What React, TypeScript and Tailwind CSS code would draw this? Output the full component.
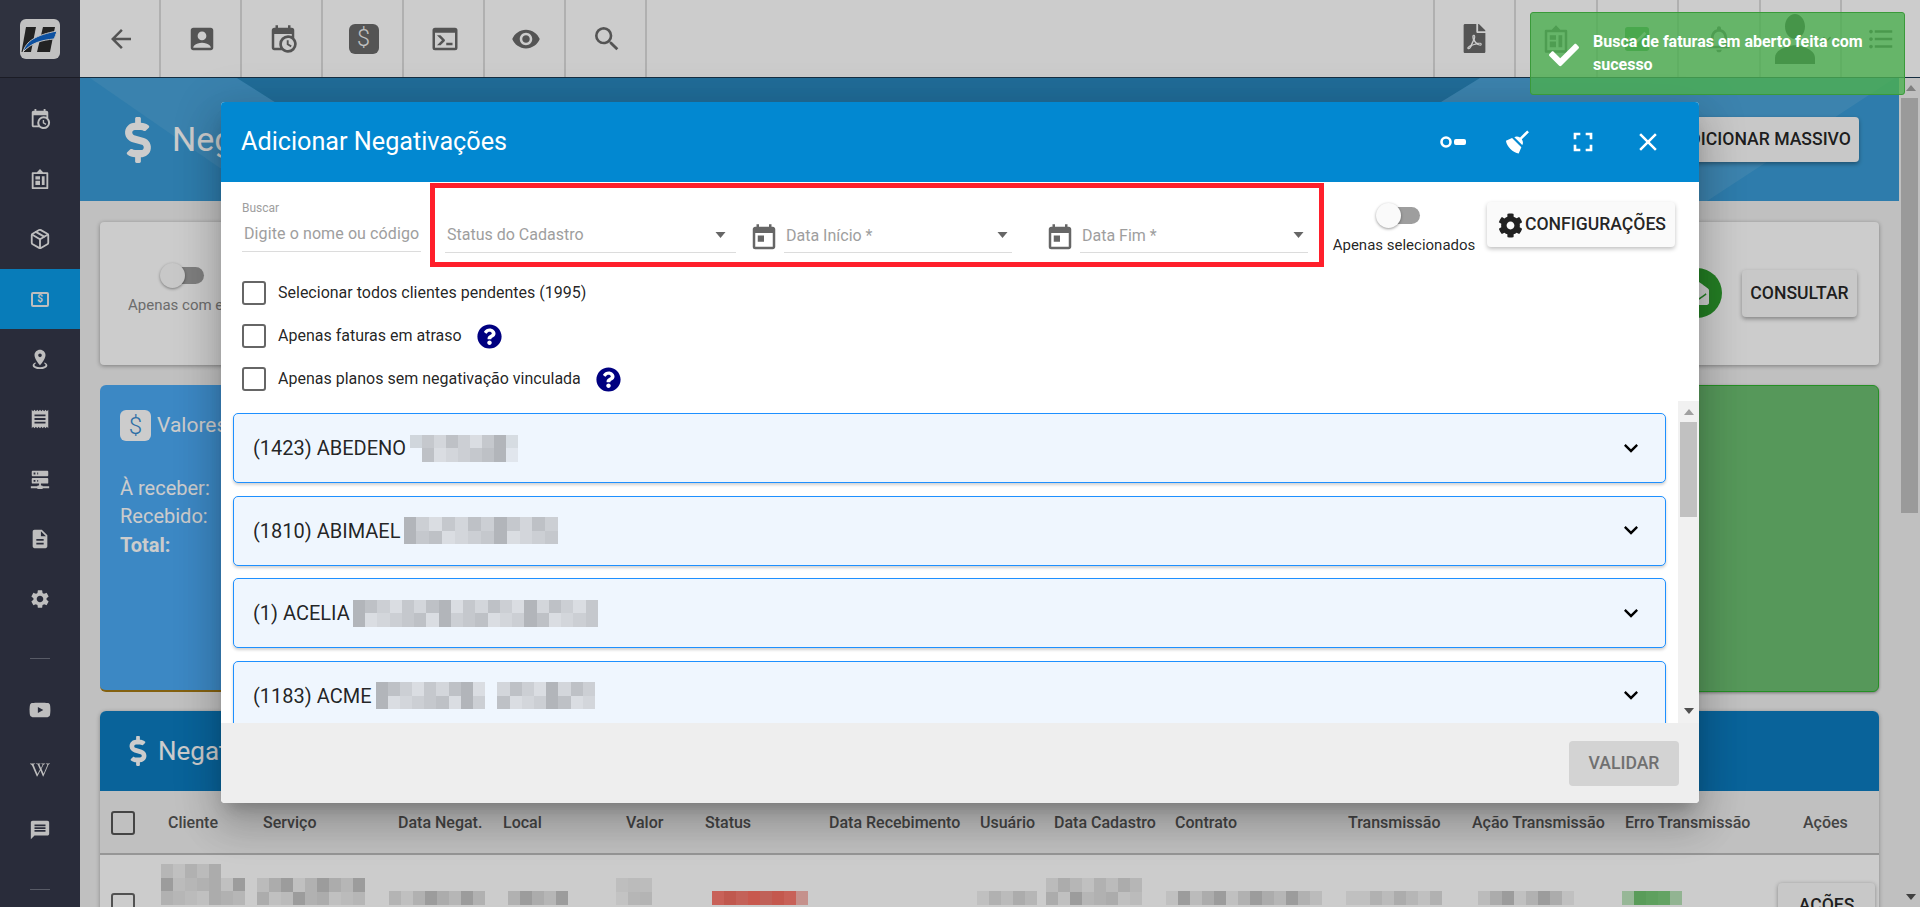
import React from 'react';
import {
  MdAccountBox,
  MdArrowBack,
  MdCheckBox,
  MdClose,
  MdDescription,
  MdExpandMore,
  MdFormatListBulleted,
  MdFullscreen,
  MdMessage,
  MdNotificationsNone,
  MdPerson,
  MdReceipt,
  MdRemoveRedEye,
  MdSearch,
  MdSettings,
  MdToday,
} from 'react-icons/md';
import {
  FaCheck,
  FaCog,
  FaDollarSign,
  FaEnvelopeOpen,
  FaFilePdf,
  FaQuestionCircle,
  FaWikipediaW,
  FaYoutube,
} from 'react-icons/fa';
import { LuPackage } from 'react-icons/lu';

type IconProps = { size?: number; className?: string };

const Mdi: React.FC<IconProps & { d: string }> = ({ d, size = 24, className }) => (
  <svg width={size} height={size} viewBox="0 0 24 24" fill="currentColor" className={className}>
    <path d={d} />
  </svg>
);

const CalendarClock: React.FC<IconProps> = props => (
  <Mdi
    {...props}
    d="M15,13H16.5V15.82L18.94,17.23L18.19,18.53L15,16.69V13M19,8H5V19H9.67C9.24,18.09 9,17.07 9,16A7,7 0 0,1 16,9C17.07,9 18.09,9.24 19,9.67V8M5,21C3.89,21 3,20.1 3,19V5C3,3.89 3.89,3 5,3H6V1H8V3H16V1H18V3H19A2,2 0 0,1 21,5V11.1C22.24,12.36 23,14.09 23,16A7,7 0 0,1 16,23C14.09,23 12.36,22.24 11.1,21H5M16,11.15A4.85,4.85 0 0,0 11.15,16C11.15,18.68 13.32,20.85 16,20.85A4.85,4.85 0 0,0 20.85,16C20.85,13.32 18.68,11.15 16,11.15Z"
  />
);

const Console: React.FC<IconProps> = props => (
  <Mdi
    {...props}
    d="M20,19V7H4V19H20M20,3A2,2 0 0,1 22,5V19A2,2 0 0,1 20,21H4A2,2 0 0,1 2,19V5A2,2 0 0,1 4,3H20M13,17V15H18V17H13M9.58,13L5.57,9H8.4L11.7,12.3C12.09,12.69 12.09,13.33 11.7,13.72L8.42,17H5.59L9.58,13Z"
  />
);

const MapMarkerRadius: React.FC<IconProps> = props => (
  <Mdi
    {...props}
    d="M12,2C15.31,2 18,4.66 18,7.95C18,12.41 12,19 12,19C12,19 6,12.41 6,7.95C6,4.66 8.69,2 12,2M12,6A2,2 0 0,0 10,8A2,2 0 0,0 12,10A2,2 0 0,0 14,8A2,2 0 0,0 12,6M20,19C20,21.21 16.42,23 12,23C7.58,23 4,21.21 4,19C4,17.71 5.22,16.56 7.11,15.83L7.75,16.74C6.67,17.19 6,17.81 6,18.5C6,19.88 8.69,21 12,21C15.31,21 18,19.88 18,18.5C18,17.81 17.33,17.19 16.25,16.74L16.89,15.83C18.78,16.56 20,17.71 20,19Z"
  />
);

const ServerNetwork: React.FC<IconProps> = props => (
  <Mdi
    {...props}
    d="M13,19H14A1,1 0 0,1 15,20H22V22H15A1,1 0 0,1 14,23H10A1,1 0 0,1 9,22H2V20H9A1,1 0 0,1 10,19H11V17H4A1,1 0 0,1 3,16V12A1,1 0 0,1 4,11H20A1,1 0 0,1 21,12V16A1,1 0 0,1 20,17H13V19M4,3H20A1,1 0 0,1 21,4V8A1,1 0 0,1 20,9H4A1,1 0 0,1 3,8V4A1,1 0 0,1 4,3M9,7H10V5H9V7M9,15H10V13H9V15M5,5V7H7V5H5M5,13V15H7V13H5Z"
  />
);

const Broom: React.FC<IconProps> = props => (
  <Mdi
    {...props}
    d="M19.36,2.72L20.78,4.14L15.06,9.85C16.13,11.39 16.28,13.24 15.38,14.44L9.06,8.12C10.26,7.22 12.11,7.37 13.65,8.44L19.36,2.72M5.93,17.57C3.92,15.56 2.69,13.16 2.35,10.92L7.23,8.83L14.67,16.27L12.58,21.15C10.34,20.81 7.94,19.58 5.93,17.57Z"
  />
);

// prancheta com telhadinho em cima e paineis dentro
const BoardIcon: React.FC<IconProps> = ({ size = 24, className }) => (
  <svg width={size} height={size} viewBox="0 0 24 24" fill="currentColor" className={className}>
    <path d="M12 1l3.4 3.5H20a1 1 0 0 1 1 1V22a1 1 0 0 1-1 1H4a1 1 0 0 1-1-1V5.5a1 1 0 0 1 1-1h4.6L12 1zM5 6.5V21h14V6.5H5zM7 9h5v3.5H7V9zm0 5h5v4.5H7V14zm7-5h3v9.5h-3V9z" />
  </svg>
);

const DollarBox: React.FC<IconProps & { box?: string; ink?: string }> = ({
  size = 30,
  box = 'bg-[#6a6a6a]',
  ink = 'text-[#f2f2f2]',
}) => (
  <div
    className={`flex items-center justify-center rounded-[6px] font-light ${box} ${ink}`}
    style={{ width: size, height: size, fontSize: size * 0.78 }}
  >
    $
  </div>
);

const KeyIcon: React.FC = () => (
  <svg width="26" height="14" viewBox="0 0 26 14" fill="none">
    <circle cx="6" cy="7" r="4.5" stroke="white" strokeWidth="2.6" />
    <rect x="14" y="4" width="12" height="6" rx="2" fill="white" />
  </svg>
);

const Logo: React.FC = () => (
  <svg width="40" height="40" viewBox="0 0 40 40">
    <rect width="40" height="40" rx="6" fill="#f2f2f2" />
    <path d="M6 8h10l-5 25H1.5z" fill="#2b2b2b" />
    <path d="M23 8h12l-5 25H17z" fill="#2b2b2b" />
    <path d="M3 33C6 22 16 16 37 12c-1 3-2 6-3 8-12 1-23 4-31 13z" fill="#0f64c8" stroke="#f2f2f2" strokeWidth="1" />
  </svg>
);

// bloco pixelado que esconde dado de cliente; '.' deixa a celula vazia, 'l' deixa ela mais clara
const TONES: Record<string, (n: number) => string> = {
  list: n => {
    const v = n % 7 === 0 ? 178 : 190 + (n % 5) * 7;
    return `rgb(${v},${v + 3},${v + 8})`;
  },
  gray: n => {
    const v = n % 6 === 0 ? 196 : 216 + (n % 5) * 6;
    return `rgb(${v},${v},${v})`;
  },
  red: n => `rgb(${240 + (n % 3) * 5},${104 + (n % 4) * 6},${92 + (n % 4) * 6})`,
  green: n => `rgb(${112 + (n % 3) * 6},${196 + (n % 3) * 4},${112 + (n % 3) * 6})`,
};

const Pix: React.FC<{ rows: string[]; w?: number; h?: number; tone?: string; seed?: number; className?: string }> = ({
  rows,
  w = 12,
  h = 13.5,
  tone = 'gray',
  seed = 3,
  className = '',
}) => (
  <div className={`flex flex-col shrink-0 ${className}`}>
    {rows.map((row, r) => (
      <div key={r} className="flex">
        {row.split('').map((c, i) => (
          <div
            key={i}
            style={{
              width: w,
              height: h,
              opacity: c === 'l' ? 0.5 : 1,
              backgroundColor: c === '.' ? 'transparent' : TONES[tone]((seed + i * 3 + r * 11 + i * r) * 7 + i),
            }}
          />
        ))}
      </div>
    ))}
  </div>
);

const Arrow: React.FC<{ up?: boolean; className?: string }> = ({ up, className }) => (
  <svg width="10" height="6" viewBox="0 0 10 6" fill="currentColor" className={className}>
    <path d={up ? 'M5 0l5 6H0z' : 'M0 0h10L5 6z'} />
  </svg>
);

const Toggle: React.FC = () => (
  <div className="relative w-[44px] h-[26px]">
    <div className="absolute left-[9px] right-0 top-[4px] h-[17px] rounded-full bg-[#9e9e9e]" />
    <div className="absolute left-0 top-0 w-[25px] h-[25px] rounded-full bg-[#fafafa] shadow-[0_1px_3px_rgba(0,0,0,0.4)]" />
  </div>
);

const Checkbox: React.FC = () => (
  <div className="w-6 h-6 shrink-0 rounded-[3px] border-2 border-[#666666] bg-white" />
);

const SelectField: React.FC<{ label: string; width: string; tight?: boolean }> = ({ label, width, tight }) => (
  <div
    className={`flex items-center justify-between h-[34px] pb-[2px] border-b border-[#dcdcdc] text-[16px] text-[#9e9e9e] pl-[2px] ${width} ${tight ? 'pr-[4px]' : 'pr-[10px]'}`}
  >
    <span className={tight ? 'pt-[2px]' : ''}>{label}</span>
    <Arrow className="w-[11px] text-[#666666]" />
  </div>
);

const topLeft = [
  <MdArrowBack size={30} />,
  <MdAccountBox size={30} />,
  <CalendarClock size={30} />,
  <DollarBox />,
  <Console size={30} />,
  <MdRemoveRedEye size={30} />,
  <MdSearch size={32} />,
];

const topRight = [
  <FaFilePdf size={29} />,
  <BoardIcon size={30} />,
  <MdCheckBox size={32} />,
  <MdNotificationsNone size={32} />,
  <div className="flex items-center text-[#3c3c3c]">
    <MdPerson size={60} className="scale-y-125" />
    <MdExpandMore size={16} className="-ml-[6px]" />
  </div>,
  <MdFormatListBulleted size={30} className="text-[#555555]" />,
];

const sideTop = [
  <CalendarClock size={22} />,
  <BoardIcon size={22} />,
  <LuPackage size={22} />,
  <div className="flex items-center justify-center w-[18px] h-[15px] rounded-[2px] border-2 border-[#eeeeee] text-[10px] font-bold leading-none">
    $
  </div>,
  <MapMarkerRadius size={22} />,
  <MdReceipt size={22} />,
  <ServerNetwork size={22} />,
  <MdDescription size={22} />,
  <MdSettings size={22} />,
];

const sideBottom = [<FaYoutube size={22} />, <FaWikipediaW size={20} />, <MdMessage size={22} />];

const columns = [
  { label: 'Cliente', w: 'w-[95px]' },
  { label: 'Serviço', w: 'w-[135px]' },
  { label: 'Data Negat.', w: 'w-[105px]' },
  { label: 'Local', w: 'w-[123px]' },
  { label: 'Valor', w: 'w-[79px]' },
  { label: 'Status', w: 'w-[124px]' },
  { label: 'Data Recebimento', w: 'w-[151px]' },
  { label: 'Usuário', w: 'w-[74px]' },
  { label: 'Data Cadastro', w: 'w-[121px]' },
  { label: 'Contrato', w: 'w-[173px]' },
  { label: 'Transmissão', w: 'w-[124px]' },
  { label: 'Ação Transmissão', w: 'w-[153px]' },
  { label: 'Erro Transmissão', w: 'w-[178px]' },
  { label: 'Ações', w: 'w-[60px]' },
];

const clients = [
  { name: '(1423) ABEDENO', gap: 'ml-[4px]', w: 12, rows: ['lxxxxxxxl', '.xxxxxxxl'], seed: 2 },
  { name: '(1810) ABIMAEL', gap: 'ml-[3px]', w: 12.9, rows: ['xxxxxxxxxxxx', 'xxxxxxxxxxxx'], seed: 5 },
  { name: '(1) ACELIA', gap: 'ml-[3px]', w: 12.25, rows: ['xxxxxxxxxxxxxxxxxxxx', 'xxxxxxxxxxxxxxxxxxxx'], seed: 9 },
  { name: '(1183) ACME', gap: 'ml-[4px]', w: 12.2, rows: ['xxxxxxxxx.xxxxxxxx', 'xxxxxxxxx.xxxxxxxx'], seed: 4 },
];

const App: React.FC = () => {
  return (
    <div className="relative flex w-[1920px] h-[907px] overflow-hidden bg-[#f0f0f0] text-[rgba(0,0,0,0.87)] font-['Roboto',sans-serif]">
      <aside className="flex flex-col w-20 shrink-0 bg-[#343849] text-[#eeeeee]">
        <div className="flex items-center justify-center h-[78px] shrink-0 bg-[#3b3f4f] border-b border-[#22242f]">
          <Logo />
        </div>
        <div className="mt-[11px] flex flex-col">
          {sideTop.map((icon, i) => (
            <div key={i} className={`flex items-center justify-center h-[60px] ${i === 3 ? 'bg-[#0a9be8]' : ''}`}>
              {icon}
            </div>
          ))}
        </div>
        <div className="mx-[30px] mt-[29px] h-px bg-[#6e7280]" />
        <div className="mt-[21px] flex flex-col">
          {sideBottom.map((icon, i) => (
            <div key={i} className="flex items-center justify-center h-[60px]">
              {icon}
            </div>
          ))}
        </div>
        <div className="mx-[30px] mt-[29px] h-px bg-[#6e7280]" />
      </aside>

      <div className="flex flex-col flex-1 min-w-0">
        <header className="flex justify-between h-[78px] shrink-0 bg-white border-b border-[#1b3a52] text-[#6a6a6a]">
          <div className="flex">
            {topLeft.map((icon, i) => (
              <div key={i} className="flex items-center justify-center w-[81px] pl-[2px] border-r-2 border-[#dcdcdc]">
                {icon}
              </div>
            ))}
          </div>
          <div className="flex">
            {topRight.map((icon, i) => (
              <div
                key={i}
                className={`flex items-center justify-center border-l-2 border-[#dcdcdc] ${i === 5 ? 'w-[80px]' : 'w-[81.5px]'} ${i === 2 ? 'text-[#4caf50]' : ''}`}
              >
                {icon}
              </div>
            ))}
          </div>
        </header>

        <div className="flex flex-1 min-h-0">
          <main className="w-[1821px] shrink-0 overflow-hidden">
            <section className="relative flex items-center justify-between h-[123px] mr-[2px] pl-[35px] pr-[40px] bg-[#3a9cd7] overflow-hidden">
              <svg className="absolute inset-0" width="1819" height="123">
                <polygon points="10,0 157,0 300,90 140,90" fill="#ffffff" fillOpacity="0.08" />
                <polygon points="157,0 1400,0 1200,123 350,123" fill="#2988be" />
                <polygon points="1400,0 1815,0 1627,123 1200,123" fill="#ffffff" fillOpacity="0.09" />
              </svg>
              <div className="relative flex items-center gap-[11px] text-white">
                <FaDollarSign size={46} />
                <span className="text-[34px]">Negativações</span>
              </div>
              <button className="relative h-[45px] px-[8px] rounded-[4px] bg-[#fafafa] text-[17.6px] font-medium shadow-[0_2px_4px_rgba(0,0,0,0.35)]">
                ADICIONAR MASSIVO
              </button>
            </section>

            <div className="flex flex-col gap-5 pl-5 pr-[22px] pt-[21px]">
              <section className="flex justify-between h-[143px] rounded-[4px] bg-white shadow-[0_1px_4px_rgba(0,0,0,0.35)] pl-[28px] pr-0">
                <div className="flex flex-col items-start pt-[41px]">
                  <div className="ml-[32px]">
                    <Toggle />
                  </div>
                  <span className="mt-[5px] text-[15px] text-[#888888]">Apenas com erros</span>
                </div>
                <div className="flex items-center gap-5 pt-[46px] pr-[22px] self-start">
                  <div className="flex items-center justify-center w-[50px] h-[50px] rounded-full bg-[#2e9e2e] text-white">
                    <FaEnvelopeOpen size={24} />
                  </div>
                  <button className="h-[47px] w-[115px] rounded-[4px] bg-[#fafafa] text-[17.6px] font-medium shadow-[0_2px_4px_rgba(0,0,0,0.35)]">
                    CONSULTAR
                  </button>
                </div>
              </section>

              <div className="flex gap-5 h-[307px]">
                <section className="flex-1 rounded-[6px] bg-[#4caaf6] border-b-2 border-[#a67a14] pl-5 pt-[25px] text-white">
                  <div className="flex items-center gap-[6px]">
                    <DollarBox size={31} box="bg-white" ink="text-[#3a8bd0]" />
                    <span className="text-[21px]">Valores</span>
                  </div>
                  <div className="mt-[32px] text-[20px] leading-[28.5px]">
                    <p>À receber:</p>
                    <p>Recebido:</p>
                    <p className="font-bold">Total:</p>
                  </div>
                </section>
                <section className="flex-1 rounded-[6px] bg-[#f5a623]" />
                <section className="flex-1 rounded-[6px] bg-[#6cbf71] border border-[#2fb52f] shadow-[0_1px_3px_rgba(0,0,0,0.4)]" />
              </div>

              <section className="-mt-px rounded-t-[6px] shadow-[0_1px_4px_rgba(0,0,0,0.3)] bg-white">
                <div className="flex items-center gap-[5px] h-[80px] pl-[23px] rounded-t-[6px] bg-[#0c7cc1] text-white">
                  <FaDollarSign size={30} />
                  <span className="text-[26px]">Negativações</span>
                </div>
                <div className="flex items-center h-[64px] pt-px bg-[#f0f0f0] border-b-2 border-[#bcbcbc] pl-[11px] text-[16px] font-medium text-[#555555]">
                  <div className="w-6 h-6 mr-[33px] rounded-[3px] border-2 border-[#555555]" />
                  {columns.map(col => (
                    <div key={col.label} className={`shrink-0 whitespace-nowrap ${col.w}`}>
                      {col.label}
                    </div>
                  ))}
                </div>
                <div className="flex items-start h-[60px] pl-[11px]">
                  <div className="mt-[38px]">
                    <Checkbox />
                  </div>
                  <Pix className="ml-[26px] mt-[9px]" rows={['xxxxx', 'xxxxxxx', 'xxxxxxx']} seed={1} />
                  <Pix className="ml-[12px] mt-[23px]" rows={['xxxxxxxxx', 'xxxxxxxxx']} seed={4} />
                  <Pix className="ml-[24px] mt-[36px]" rows={['lxxxxxxx']} seed={6} />
                  <Pix className="ml-[23px] mt-[36px]" rows={['xxxxx']} seed={8} />
                  <Pix className="ml-[48px] mt-[23px]" rows={['lxl', 'lxl']} seed={3} />
                  <Pix className="ml-[60px] mt-[36px]" rows={['xxxxxxxl']} tone="red" seed={5} />
                  <Pix className="ml-[169px] mt-[36px]" rows={['xxxxx']} seed={7} />
                  <Pix className="ml-[9px] mt-[23px]" rows={['xxxxxxxx', 'xxxxxxxx']} seed={9} />
                  <Pix className="ml-[24px] mt-[36px]" rows={['xxxxxxxxxxxxx']} seed={2} />
                  <Pix className="ml-[24px] mt-[36px]" rows={['lxxxxxxx']} seed={1} />
                  <Pix className="ml-[36px] mt-[36px]" rows={['xxxxxxxl']} seed={4} />
                  <Pix className="ml-[48px] mt-[36px]" rows={['lxxxl']} tone="green" seed={2} />
                  <button className="ml-[96px] mt-[28px] w-[97px] h-[45px] rounded-[4px] bg-[#fafafa] text-[17.6px] font-medium shadow-[0_1px_4px_rgba(0,0,0,0.35)]">
                    AÇÕES
                  </button>
                </div>
              </section>
            </div>
          </main>

          <div className="flex flex-col w-[19px] bg-[#f1f1f1] text-[#a0a0a0]">
            <div className="flex items-center justify-center h-5">
              <Arrow up />
            </div>
            <div className="w-[17px] h-[415px] bg-[#c1c1c1]" />
            <div className="mt-auto flex items-center justify-center h-5 text-[#505050]">
              <Arrow />
            </div>
          </div>
        </div>
      </div>

      <div className="absolute inset-0 z-10 bg-black/20" />

      {/* modal */}
      <div className="absolute z-20 left-[221px] top-[102px] flex flex-col w-[1478px] h-[701px] rounded-[4px] overflow-hidden bg-white shadow-[0_11px_15px_-7px_rgba(0,0,0,0.2),0_24px_38px_3px_rgba(0,0,0,0.14),0_9px_46px_8px_rgba(0,0,0,0.12)]">
        <div className="flex items-center justify-between h-20 shrink-0 bg-[#0288d1] pl-5 pr-[19px] text-white">
          <h2 className="text-[25.2px] font-normal">Adicionar Negativações</h2>
          <div className="flex items-center">
            <div className="flex justify-center w-[65px]">
              <KeyIcon />
            </div>
            <div className="flex justify-center w-[65px]">
              <Broom size={30} />
            </div>
            <div className="flex justify-center w-[65px]">
              <MdFullscreen size={32} />
            </div>
            <div className="flex justify-center w-[65px]">
              <MdClose size={30} />
            </div>
          </div>
        </div>

        <div className="flex items-start h-[87px] shrink-0 pl-[21px]">
          <div className="w-[179px] mt-[18px]">
            <div className="h-[16px] text-[12px] leading-[16px] text-[#9e9e9e]">Buscar</div>
            <div className="flex items-center h-[36px] pt-px border-b border-[#dcdcdc] pl-[2px] text-[16px] tracking-[0.1px] text-[#9e9e9e] whitespace-nowrap">
              Digite o nome ou código
            </div>
          </div>
          <div className="flex items-end w-[894px] h-[84px] ml-[9px] mt-px border-[5px] border-[#ff1f2b] pl-[10px] pb-[9px]">
            <SelectField label="Status do Cadastro" width="w-[291px]" />
            <MdToday size={30} className="ml-[13px] mr-[5px] text-[#666666]" />
            <SelectField label="Data Início *" width="w-[228px]" tight />
            <MdToday size={30} className="ml-[33px] mr-[5px] text-[#666666]" />
            <SelectField label="Data Fim *" width="w-[228px]" tight />
          </div>
          <div className="flex flex-col items-center w-[140px] ml-[10px] mt-[20px]">
            <div className="ml-[-13px] mt-px">
              <Toggle />
            </div>
            <span className="mt-[5px] text-[15px] whitespace-nowrap">Apenas selecionados</span>
          </div>
          <button className="flex items-center justify-center gap-[2px] w-[188px] h-[45px] ml-[13px] mt-[20px] pl-[2px] rounded-[4px] bg-[#fafafa] text-[17.6px] font-medium whitespace-nowrap shadow-[0_2px_4px_rgba(0,0,0,0.25)]">
            <FaCog size={25} className="mt-px" />
            CONFIGURAÇÕES
          </button>
        </div>

        <div className="flex flex-col gap-[19px] pl-[21px] pt-[12px] pb-[10px] text-[16px]">
          <label className="flex items-center h-6 gap-3">
            <Checkbox />
            Selecionar todos clientes pendentes (1995)
          </label>
          <label className="flex items-center h-6 gap-3">
            <Checkbox />
            Apenas faturas em atraso
            <FaQuestionCircle size={25} className="ml-[3px] text-[#000080]" />
          </label>
          <label className="flex items-center h-6 gap-3">
            <Checkbox />
            Apenas planos sem negativação vinculada
            <FaQuestionCircle size={25} className="ml-[3px] text-[#000080]" />
          </label>
        </div>

        <div className="flex flex-1 min-h-0">
          <div className="flex flex-col gap-[12.6px] flex-1 min-w-0 overflow-hidden pl-3 pr-3 pt-3">
            {clients.map(client => (
              <div
                key={client.name}
                className="flex items-center justify-between h-[70px] shrink-0 rounded-[5px] border border-[#1e90ff] bg-[#eff6fe] pl-[19px] pr-[20px] shadow-[0_2px_3px_rgba(0,0,0,0.18)]"
              >
                <div className="flex items-center">
                  <span className="text-[20px]">{client.name}</span>
                  <Pix className={client.gap} tone="list" w={client.w} rows={client.rows} seed={client.seed} />
                </div>
                <MdExpandMore size={28} className="text-black -mt-px" />
              </div>
            ))}
          </div>
          <div className="flex flex-col items-center w-[21px] shrink-0 bg-[#f1f1f1]">
            <div className="flex items-center justify-center h-[21px] text-[#a0a0a0]">
              <Arrow up />
            </div>
            <div className="w-[17px] h-[95px] bg-[#c1c1c1]" />
            <div className="mt-auto flex items-center justify-center h-[24px] text-[#505050]">
              <Arrow />
            </div>
          </div>
        </div>

        <div className="flex items-center justify-end h-20 shrink-0 bg-[#eeeeee] pr-5">
          <button className="w-[110px] h-[45px] rounded-[4px] bg-[#d3d3d3] text-[17.6px] font-medium text-[#707070]">
            VALIDAR
          </button>
        </div>
      </div>

      {/* toast */}
      <div className="absolute z-30 left-[1530px] top-[12px] flex w-[375px] h-[83px] rounded-[3px] border border-[#3a9a3a] bg-[#4caf50]/80 pl-[18px] pt-[17px] text-white">
        <FaCheck size={30} className="mt-[10px] shrink-0" />
        <p className="ml-[14px] w-[290px] text-[16px] font-bold leading-[23px]">
          Busca de faturas em aberto feita com sucesso
        </p>
      </div>
    </div>
  );
};

export default App;
